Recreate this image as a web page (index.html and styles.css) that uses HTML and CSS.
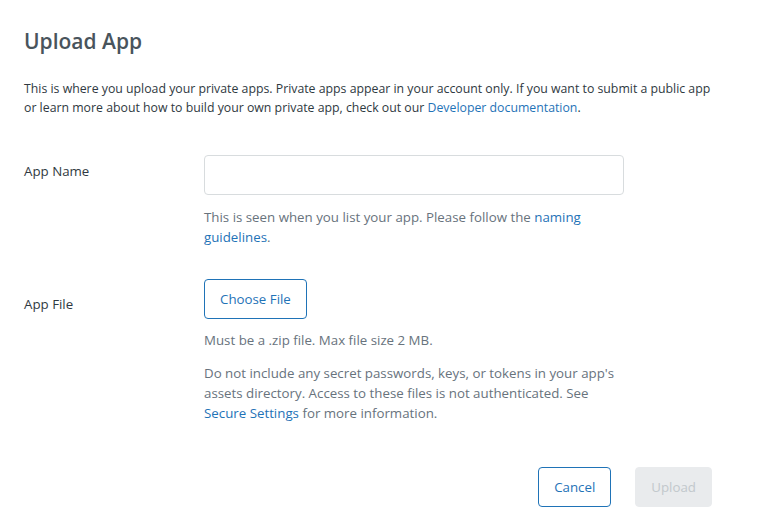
FILE: index.html
```html
<!DOCTYPE html>
<html>
<head>
<meta charset="utf-8">
<link rel="stylesheet" href="styles.css">
</head>
<body>
<div class="page">
  <h1 class="title">Upload App</h1>
  <p class="intro">This is where you upload your private apps. Private apps appear in your account only. If you want to submit a public app or learn more about how to build your own private app, check out our <a class="link" href="#">Developer documentation</a>.</p>

  <div class="row row-name">
    <div class="label">App Name</div>
    <div class="field">
      <input class="input" type="text">
      <p class="hint">This is seen when you list your app. Please follow the <a class="link" href="#">naming guidelines</a>.</p>
    </div>
  </div>

  <div class="row row-file">
    <div class="label label-file">App File</div>
    <div class="field">
      <button class="btn btn-outline btn-file">Choose File</button>
      <p class="hint hint-zip">Must be a .zip file. Max file size 2 MB.</p>
      <p class="hint hint-secure">Do not include any secret passwords, keys, or tokens in your app's assets directory. Access to these files is not authenticated. See <a class="link" href="#">Secure Settings</a> for more information.</p>
    </div>
  </div>

  <div class="actions">
    <button class="btn btn-outline">Cancel</button>
    <button class="btn btn-disabled">Upload</button>
  </div>
</div>
</body>
</html>
```

FILE: styles.css
```css
html, body {
  margin: 0;
  padding: 0;
  background: #fff;
}
body {
  font-family: "Open Sans", "Noto Sans", sans-serif;
  font-size: 13.3px;
  color: #2f3941;
}
.page {
  width: 688px;
  padding: 26px 0 0 24px;
}
.title {
  margin: 0;
  font-size: 21px;
  line-height: 30px;
  font-weight: 600;
  color: #49545c;
}
.intro {
  margin: 23px 0 0;
  font-size: 12.3px;
  line-height: 19px;
  color: #2f3941;
}
.link {
  color: #1f73b7;
  text-decoration: none;
}
.row {
  display: flex;
}
.row-name {
  margin-top: 38px;
}
.row-file {
  margin-top: 32px;
}
.label {
  width: 180px;
  padding-top: 8px;
  line-height: 16px;
  color: #2f3941;
}
.label-file {
  padding-top: 17px;
}
.field {
  width: 420px;
}
.input {
  display: block;
  box-sizing: border-box;
  width: 420px;
  height: 40px;
  margin: 0;
  border: 1px solid #d8dcde;
  border-radius: 4px;
  background: #fff;
}
.hint {
  margin: 12px 0 0;
  line-height: 20px;
  color: #68737d;
}
.hint-zip {
  margin-top: 11px;
}
.hint-secure {
  margin-top: 13px;
}
.btn {
  box-sizing: border-box;
  height: 40px;
  padding: 0 15px;
  border-radius: 4px;
  font-family: inherit;
  font-size: 13.3px;
  line-height: 38px;
  cursor: pointer;
}
.btn-outline {
  background: #fff;
  border: 1px solid #1f73b7;
  color: #1f73b7;
}
.btn-disabled {
  background: #e9ebed;
  border: 1px solid #e9ebed;
  color: #c2c8cc;
}
.actions {
  display: flex;
  justify-content: flex-end;
  gap: 24px;
  margin-top: 44px;
}
```
